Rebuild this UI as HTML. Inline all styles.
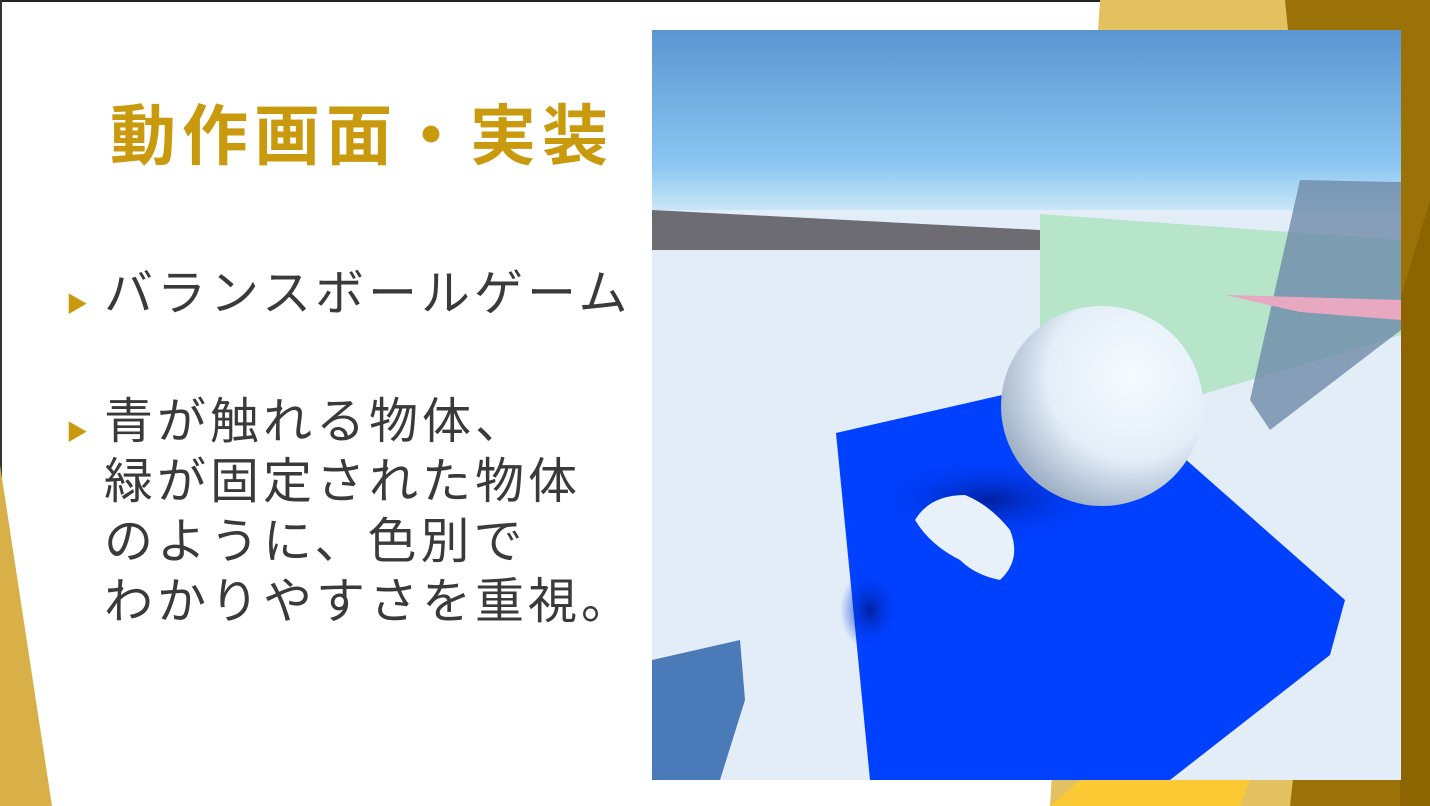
<!DOCTYPE html>
<html><head><meta charset="utf-8"><style>
body{margin:0;width:1430px;height:806px;overflow:hidden;background:#fff;position:relative;font-family:"Liberation Sans","Noto Sans CJK JP",sans-serif}
.t{position:absolute;left:110px;top:96px;font-size:66px;font-weight:bold;color:#c99a0e;letter-spacing:6px;line-height:80px}
.b{position:absolute;left:104px;font-size:49px;color:#3a3a3a;line-height:60px;letter-spacing:4px}
.m{position:absolute;left:66px;color:#c99a0e;font-size:22px}
</style></head><body>
<svg width="1430" height="806" style="position:absolute;left:0;top:0">
<rect x="0" y="0" width="1430" height="2" fill="#222"/>
<rect x="0" y="0" width="2" height="806" fill="#333"/>
<polygon points="0,465 52,806 0,806" fill="#d9b048"/>
<polygon points="1100,0 1295,0 1330,806 1050,806" fill="#e3c060"/>
<polygon points="1285,0 1430,0 1430,806 1290,806 1330,450" fill="#9b7207"/>
<polygon points="1050,806 1240,806 1250,780 1080,780" fill="#fbc934"/>
<polygon points="1400,300 1430,200 1430,806 1400,806" fill="#8d6500"/>
<defs>
<linearGradient id="sky" x1="0" y1="0" x2="0" y2="1"><stop offset="0" stop-color="#5a95d0"/><stop offset="0.75" stop-color="#8cc6f2"/><stop offset="1" stop-color="#c9e6f6"/></linearGradient>
<radialGradient id="ball" cx="0.65" cy="0.35" r="0.7"><stop offset="0" stop-color="#f6fbff"/><stop offset="0.6" stop-color="#e4eef8"/><stop offset="1" stop-color="#9fb0c6"/></radialGradient>
<radialGradient id="sh" cx="0.5" cy="0.5" r="0.5"><stop offset="0" stop-color="#0020a0"/><stop offset="1" stop-color="#0040ff" stop-opacity="0"/></radialGradient>
</defs>
<rect x="652" y="30" width="749" height="750" fill="#e3edf8"/>
<rect x="652" y="30" width="749" height="180" fill="url(#sky)"/>
<polygon points="652,210 1040,230 1040,250 652,250" fill="#6d6c73"/>
<polygon points="1040,214 1401,240 1401,335 1200,395 1040,330" fill="#aee3c2" opacity="0.85"/>
<polygon points="1300,180 1401,182 1401,330 1270,430 1250,400" fill="#6e8aa8" opacity="0.8"/>
<polygon points="1225,295 1401,300 1401,320 1300,312" fill="#e8a8c0"/>
<polygon points="836,433 1090,375 1345,600 1330,655 1170,780 870,780" fill="#0040ff"/>
<ellipse cx="990" cy="500" rx="120" ry="45" fill="url(#sh)"/>
<ellipse cx="870" cy="610" rx="30" ry="40" fill="url(#sh)"/>
<polygon points="652,660 740,640 745,700 720,780 652,780" fill="#4a7ab8"/>
<ellipse cx="1102" cy="406" rx="101" ry="100" fill="url(#ball)"/>
<path d="M915,520 Q930,495 965,495 Q990,505 1010,530 Q1022,560 1000,580 Q975,575 960,560 Q930,545 915,520Z" fill="#e8f0fa"/>
</svg>
<div class="t">動作画面・実装</div>
<div class="m" style="top:287px">▶</div>
<div class="b" style="top:264px">バランスボールゲーム</div>
<div class="m" style="top:415px">▶</div>
<div class="b" style="top:392px">青が触れる物体、<br>緑が固定された物体<br>のように、色別で<br>わかりやすさを重視。</div>
</body></html>
